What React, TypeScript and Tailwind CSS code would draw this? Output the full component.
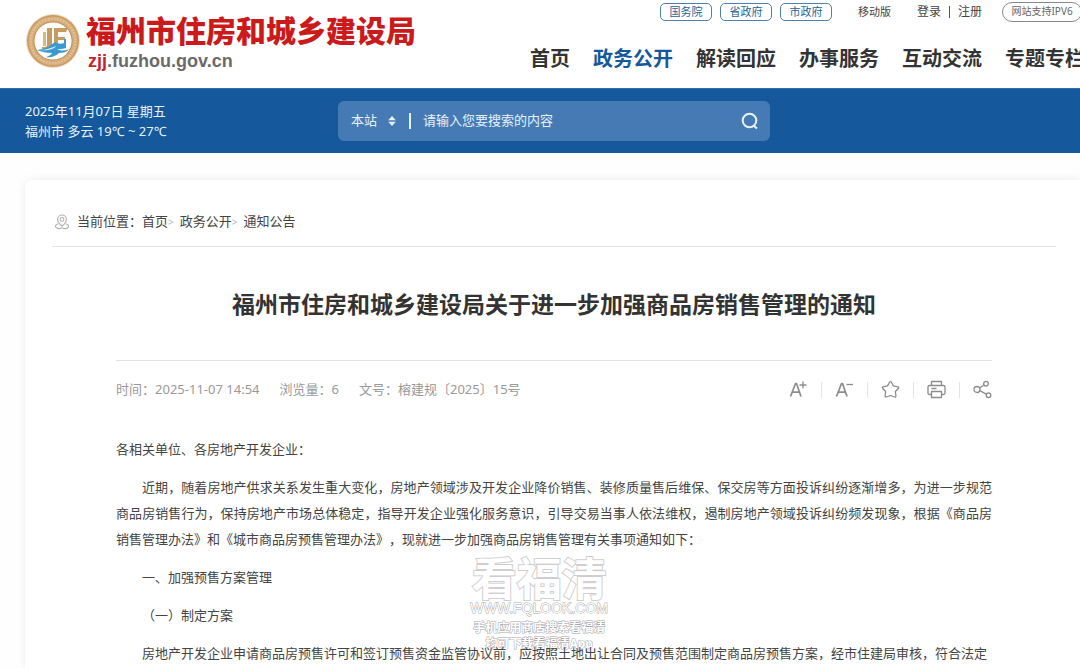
import type { ReactNode } from 'react'

const governments = ['国务院', '省政府', '市政府']

const navItems = [
  '首页',
  '政务公开',
  '解读回应',
  '办事服务',
  '互动交流',
  '专题专栏',
]

const activeNav = '政务公开'

const crumbs = ['首页', '政务公开', '通知公告']

const details = [
  { label: '时间', value: '2025-11-07 14:54' },
  { label: '浏览量', value: '6' },
  { label: '文号', value: '榕建规〔2025〕15号' },
]

const paragraphs = [
  '近期，随着房地产供求关系发生重大变化，房地产领域涉及开发企业降价销售、装修质量售后维保、保交房等方面投诉纠纷逐渐增多，为进一步规范商品房销售行为，保持房地产市场总体稳定，指导开发企业强化服务意识，引导交易当事人依法维权，遏制房地产领域投诉纠纷频发现象，根据《商品房销售管理办法》和《城市商品房预售管理办法》，现就进一步加强商品房销售管理有关事项通知如下：',
  '一、加强预售方案管理',
  '（一）制定方案',
  '房地产开发企业申请商品房预售许可和签订预售资金监管协议前，应按照土地出让合同及预售范围制定商品房预售方案，经市住建局审核，符合法定',
]

const Emblem = () => (
  <svg className="size-14 shrink-0" viewBox="0 0 56 56" aria-hidden="true">
    <circle cx="28" cy="28" r="27" fill="#f1dcc4" />
    <circle cx="28" cy="28" r="26" fill="#c9995f" />
    <circle cx="28" cy="28" r="24.6" fill="#d6ae7c" />
    <circle
      cx="28"
      cy="28"
      r="22.3"
      fill="none"
      stroke="#f0dcc0"
      strokeWidth="2"
      strokeDasharray="1.6 1.5"
      opacity="0.5"
    />
    <circle cx="28" cy="28" r="19.6" fill="#c08c50" />
    <circle cx="28" cy="28" r="18.6" fill="#fffdf9" />
    <path d="M18 19h3v14h-3z" fill="#d9b685" />
    <path d="M22 15h5v17c0 3-2 5-5 5h-5v-3h3c1.500 0 2-1 2-2.500z" fill="#c79a63" />
    <path d="M29 15h14l-2 4h-8v5h7v3h-7v7h-4z" fill="#c79a63" />
    <path
      d="M12 37c8-1 13-4 18-8 3 2 6 2 9 1v-4h2v9c-3 1-6 1-9 1 4 2 8 2 12 0-2 3-6 4-10 4-3 3-8 5-13 4 3-1 5-2 6-4-6 0-10-1-15-3z"
      fill="#3c9ad2"
    />
    <path d="M15 37c6 0 11-2 16-4-2 3-8 5-16 4z" fill="#dff0fa" />
  </svg>
)

const SearchIcon = () => (
  <svg
    className="size-5"
    viewBox="0 0 20 20"
    fill="none"
    stroke="currentColor"
    strokeWidth="2"
    aria-hidden="true"
  >
    <circle cx="9.500" cy="9.500" r="6.800" />
    <path d="M13.500 14.500l3.500 3" />
  </svg>
)

const PinIcon = () => (
  <svg
    className="size-4 text-[#b0b0b0]"
    viewBox="0 0 16 16"
    fill="none"
    stroke="currentColor"
    strokeWidth="1.1"
    aria-hidden="true"
  >
    <path d="M8 12C5 9.500 3.600 7.600 3.600 5.400a4.400 4.400 0 0 1 8.800 0C12.400 7.600 11 9.500 8 12z" />
    <circle cx="8" cy="5.400" r="1.900" />
    <path d="M4.300 9.800C2.500 10.300 1.500 11.200 1.500 12.300c0 1.500 2 2.500 3.800 2.300 1.200-.1 1.700-.8 2.700-.8s1.500.7 2.700.8c1.800.2 3.800-.8 3.800-2.300 0-1.100-1-2-2.800-2.500" />
  </svg>
)

function ToolIcon({ children }: { children: ReactNode }) {
  return (
    <svg
      className="size-[19px]"
      viewBox="0 0 19 19"
      fill="none"
      stroke="currentColor"
      strokeWidth="1.3"
      strokeLinejoin="round"
      aria-hidden="true"
    >
      {children}
    </svg>
  )
}

const tools = [
  {
    label: '放大字体',
    icon: (
      <>
        <path d="M1.500 16.500L6.500 3.500h1L12 16.500M3.200 12.200h7.400" strokeWidth="1.700" />
        <path d="M10.500 5h7M14 1.500v7" />
      </>
    ),
  },
  {
    label: '缩小字体',
    icon: (
      <>
        <path d="M1.500 16.500L6.500 3.500h1L12 16.500M3.200 12.200h7.400" strokeWidth="1.700" />
        <path d="M11.500 4.500h6.500" />
      </>
    ),
  },
  {
    label: '收藏',
    icon: (
      <path d="M8.600 2.200q.9-1.300 1.800 0l2 3.700 4.600.9q1.200.4.400 1.500l-3 3.200.5 4.600q0 1.300-1.200.9L9.500 15.500 5.300 17q-1.200.4-1.200-.9l.5-4.600-3-3.200q-.8-1.100.4-1.500l4.600-.9z" />
    ),
  },
  {
    label: '打印',
    icon: (
      <>
        <path d="M4.500 5.500v-4h10v4" />
        <path d="M4.500 14.500h-2Q1 14.500 1 13V7q0-1.500 1.500-1.500h14Q18 5.500 18 7v6q0 1.500-1.500 1.500h-2" />
        <path d="M4.500 11.500h10v6h-10zM4.500 8.500h5" />
      </>
    ),
  },
  {
    label: '分享',
    icon: (
      <>
        <circle cx="4" cy="9.500" r="3" />
        <circle cx="13" cy="3.700" r="2.300" />
        <circle cx="15.500" cy="15.200" r="2.300" />
        <path d="M6.600 8l4.500-3M6.800 10.600l6.500 3.500" />
      </>
    ),
  },
]

const Header = () => (
  <header className="flex h-22 bg-white">
    <a
      href="#"
      className="flex w-[530px] shrink-0 items-start pt-[13px] pl-[25px]"
    >
      <Emblem />
      <span className="ml-[5px]">
        <span className="block text-3xl leading-9 font-black whitespace-nowrap text-[#cb1a1c]">
          福州市住房和城乡建设局
        </span>
        <span className="block pl-0.5 font-['Liberation_Sans',sans-serif] text-lg leading-6 font-bold text-[#6a6a6a]">
          <span className="text-[#c2262c]">zjj</span>.fuzhou.gov.cn
        </span>
      </span>
    </a>
    <div className="shrink-0 whitespace-nowrap">
      <div className="flex h-6 items-center pl-[130px] text-xs text-[#444]">
        <div className="flex gap-2">
          {governments.map((name) => (
            <a
              key={name}
              href="#"
              className="flex h-[18px] w-[52px] items-center justify-center rounded-[5px] border border-[#4f7fae] text-[11px] text-[#2a5f96]"
            >
              {name}
            </a>
          ))}
        </div>
        <a href="#" className="ml-[26px] text-[11px]">
          移动版
        </a>
        <a href="#" className="ml-[26px]">
          登录
        </a>
        <span className="mx-2 h-3 w-px bg-[#555]" />
        <a href="#">注册</a>
        <a
          href="#"
          className="ml-5 flex h-5 w-20 items-center justify-center rounded-full border border-[#888] text-[10px] text-[#666]"
        >
          网站支持IPV6
        </a>
      </div>
      <nav className="mt-[21px] flex gap-[23px] text-xl font-bold">
        {navItems.map((item) => (
          <a
            key={item}
            href="#"
            className={item === activeNav ? 'text-[#15589c]' : 'text-[#333]'}
          >
            {item}
          </a>
        ))}
      </nav>
    </div>
  </header>
)

const SearchBar = () => (
  <div className="box-content flex h-16 border-t border-[#2f6ca8] bg-[#15589c] text-[13px] text-[#e6f2fb]">
    <div className="w-[338px] shrink-0 pt-3 pl-[25px] leading-5">
      <div>2025年11月07日 星期五</div>
      <div>福州市 多云 19℃ ~ 27℃</div>
    </div>
    <form className="mt-3 flex h-10 w-[432px] items-center rounded-md bg-[#467ab4] pr-2.5 pl-[13px]">
      <select
        aria-label="搜索范围"
        className="w-7 appearance-none bg-transparent outline-none"
      >
        <option>本站</option>
      </select>
      <svg
        className="ml-2 h-3 w-2.5"
        viewBox="0 0 10 12"
        fill="currentColor"
        aria-hidden="true"
      >
        <path d="M5 1l3.800 4.200H1.200zM5 11l3.800-4.200H1.200z" />
      </svg>
      <span className="mx-3 h-4 w-0.5 bg-[#e6f2fb]" />
      <input
        type="text"
        aria-label="搜索内容"
        placeholder="请输入您要搜索的内容"
        className="min-w-0 flex-1 bg-transparent outline-none placeholder:text-[#e6f2fb]"
      />
      <button type="submit" aria-label="搜索">
        <SearchIcon />
      </button>
    </form>
  </div>
)

const Breadcrumb = () => (
  <nav
    aria-label="当前位置"
    className="flex h-[67px] items-center border-b border-[#e2e2e2] pt-[18px] pl-0.5 text-[13px] text-[#444]"
  >
    <PinIcon />
    <span className="ml-[7px]">当前位置：</span>
    {crumbs.map((crumb, i) => (
      <span key={crumb} className="flex items-center">
        {i > 0 && <span className="mr-1.5 text-[10px] text-[#bbb]">&gt;</span>}
        <a href="#">{crumb}</a>
      </span>
    ))}
  </nav>
)

const Toolbar = () => (
  <div className="flex items-center gap-[13px] text-[#8c8c8c]">
    {tools.map(({ label, icon }, i) => (
      <div key={label} className="flex items-center gap-[13px]">
        {i > 0 && <span className="h-4 w-px bg-[#e4e4e4]" />}
        <button type="button" aria-label={label}>
          <ToolIcon>{icon}</ToolIcon>
        </button>
      </div>
    ))}
  </div>
)

// outlined stamp, kept underneath the article text
const Watermark = () => (
  <div className="pointer-events-none absolute right-96 bottom-3.5 text-center whitespace-nowrap text-white [paint-order:stroke]">
    <div className="text-[45px] leading-[42px] font-bold [-webkit-text-stroke:2px_#cfcfcf]">
      看福清
    </div>
    <div className="[-webkit-text-stroke:1px_#a8a8a8]">
      <div className="font-['Liberation_Sans',sans-serif] text-sm leading-4">
        WWW.FQLOOK.COM
      </div>
      <div className="mt-1 text-xs leading-4 font-bold">
        手机应用商店搜索看福清
      </div>
      <div className="text-xs leading-4 font-bold">均可下载看福清App</div>
    </div>
  </div>
)

const Article = () => (
  <article className="px-16">
    <h1 className="pt-10 pb-[39px] text-center text-[23px] leading-[34px] font-bold whitespace-nowrap text-[#333]">
      福州市住房和城乡建设局关于进一步加强商品房销售管理的通知
    </h1>
    <div className="flex h-[58px] items-center justify-between border-t border-[#e2e2e2] text-[13px] text-[#999]">
      <div className="flex gap-5">
        {details.map(({ label, value }) => (
          <span key={label}>
            {label}：{value}
          </span>
        ))}
      </div>
      <Toolbar />
    </div>
    <div className="relative mt-[18px] text-[13px] leading-[26px] text-[#444]">
      <Watermark />
      <div className="relative space-y-3 text-justify [text-spacing-trim:space-all]">
        <p>各相关单位、各房地产开发企业：</p>
        {paragraphs.map((text) => (
          <p key={text} className="indent-[26px]">
            {text}
          </p>
        ))}
      </div>
    </div>
  </article>
)

export default function App() {
  return (
    <div
      lang="zh-CN"
      className="flex min-h-screen flex-col overflow-hidden bg-[#fefefe] font-['Noto_Sans','Noto_Sans_CJK_SC',sans-serif]"
    >
      <Header />
      <SearchBar />
      <main className="mt-[27px] ml-[25px] flex-1 rounded-tl-lg bg-white pr-6 pl-[27px] shadow-[0_0_10px_rgba(0,0,0,0.08)]">
        <Breadcrumb />
        <Article />
      </main>
    </div>
  )
}
